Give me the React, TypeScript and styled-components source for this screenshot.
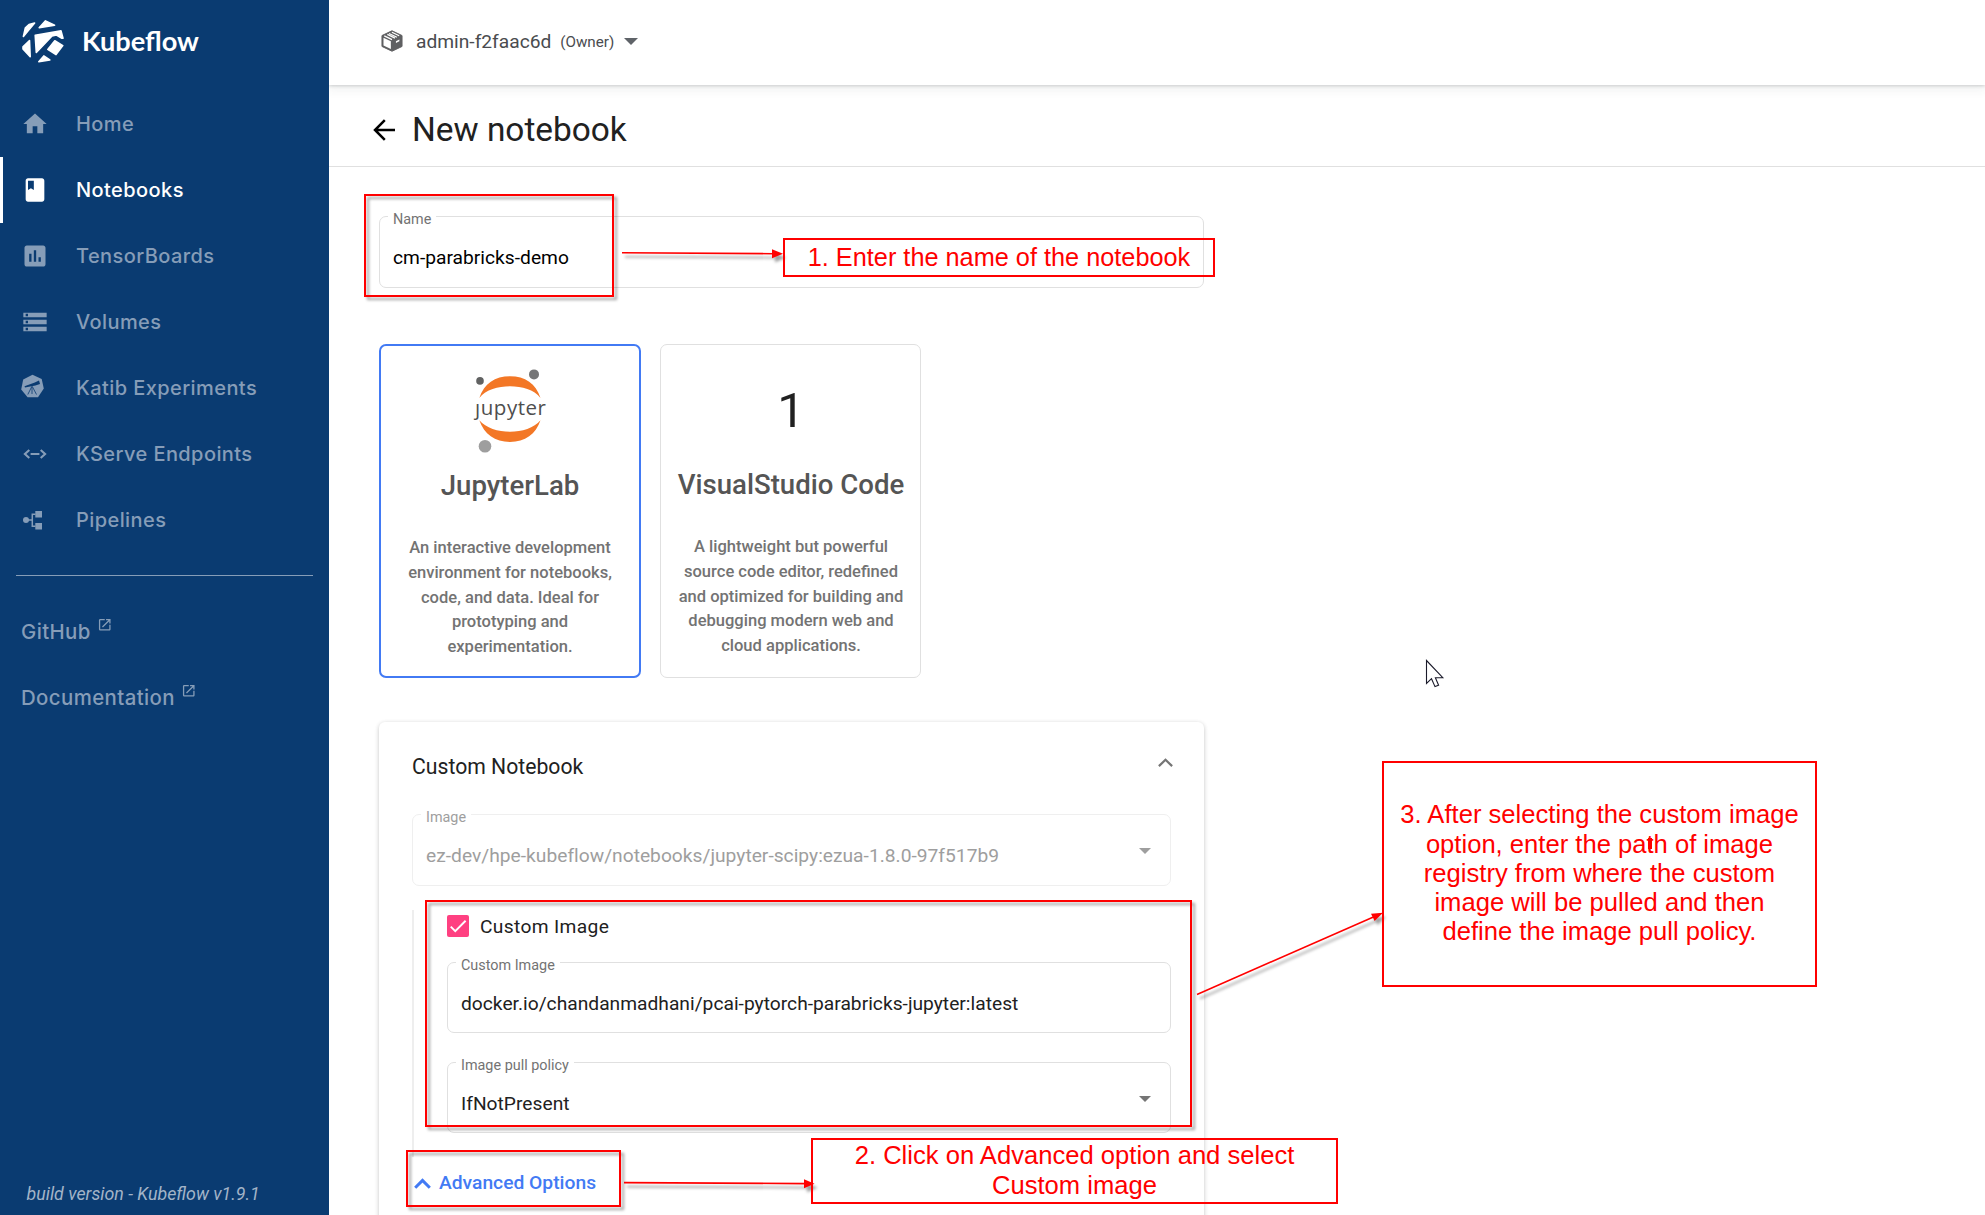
import React from "react";
import styled, { createGlobalStyle, css } from "styled-components";
import { MdHome, MdBook, MdAssessment, MdStorage, MdOpenInNew } from "react-icons/md";

const GlobalStyle = createGlobalStyle`
  * { box-sizing: border-box; }
  html, body { margin: 0; padding: 0; background: #fff; }
  body { font-family: Roboto, sans-serif; color: #212121; overflow: hidden; }
`;

const Page = styled.div`
  position: relative;
  display: grid;
  grid-template-columns: 329px 1fr;
  height: 1215px;
  overflow: hidden;
  background: #fff;
`;

/* ---------- sidebar ---------- */

const Sidebar = styled.aside`
  display: flex;
  flex-direction: column;
  background: #0a3b71;
  color: #869db8;
  font-family: Inter, sans-serif;
`;

const Brand = styled.div`
  display: flex;
  align-items: center;
  height: 91px;
  padding: 0 0 9px 21px;
  gap: 17px;
  color: #fff;
  font: 700 27.2px/36px Lato, sans-serif;
`;

const NavItem = styled.a<{ $active?: boolean }>`
  display: flex;
  align-items: center;
  height: 66px;
  padding-left: 18px;
  border-left: 3px solid ${(p) => (p.$active ? "#fff" : "transparent")};
  color: ${(p) => (p.$active ? "#fff" : "#869db8")};
  font-size: 20px;
  font-weight: 500;
  letter-spacing: 0.42px;
  svg { width: 28px; height: 28px; margin-right: 27px; flex: none; }
`;

const Divider = styled.hr`
  width: 297px;
  height: 1px;
  margin: 22px 0 22px 16px;
  border: 0;
  background: #869db8;
`;

const ExternalLink = styled.a`
  display: flex;
  align-items: center;
  height: 66px;
  padding-left: 21px;
  gap: 6px;
  font-size: 20.4px;
  font-weight: 500;
  letter-spacing: 0.4px;
  svg { width: 15.5px; height: 15.5px; margin-bottom: 13px; }
`;

const BuildVersion = styled.div`
  margin-top: auto;
  padding: 0 0 9px 26.5px;
  color: #a3b4c8;
  font: italic 400 17.8px/24px Roboto, sans-serif;
`;

/* ---------- main column ---------- */

const Main = styled.main`
  display: flex;
  flex-direction: column;
  min-width: 0;
  overflow: hidden;
`;

const TopBar = styled.header`
  position: relative;
  display: flex;
  align-items: center;
  flex: none;
  height: 85px;
  padding: 0 0 3px 52px;
  color: #4a4c4f;
  font-size: 19.2px;
  box-shadow: 0 1px 3px rgba(60, 64, 67, 0.22), 0 3px 10px 2px rgba(60, 64, 67, 0.07);
  > svg { margin-right: 13px; }
`;

const Role = styled.span`
  margin: 1px 10px 0 9px;
  font-size: 15.2px;
`;

const Caret = styled.i<{ $w: number; $h: number; $color: string }>`
  width: 0;
  height: 0;
  border-left: ${(p) => p.$w / 2}px solid transparent;
  border-right: ${(p) => p.$w / 2}px solid transparent;
  border-top: ${(p) => p.$h}px solid ${(p) => p.$color};
`;

const TitleBar = styled.div`
  display: flex;
  align-items: center;
  flex: none;
  height: 82px;
  padding: 8px 0 0 44px;
  border-bottom: 1px solid #e0e0e0;
  gap: 17px;
`;

const PageTitle = styled.h1`
  margin: 0;
  font-size: 33.4px;
  font-weight: 400;
  line-height: 40px;
`;

const Form = styled.div`
  display: flex;
  flex-direction: column;
  width: 875px;
  padding: 49px 0 0 50px;
`;

const FieldBox = styled.div<{ $height: number; $disabled?: boolean }>`
  position: relative;
  display: flex;
  align-items: flex-start;
  justify-content: space-between;
  flex: none;
  height: ${(p) => p.$height}px;
  padding: 28px 19px 0 13px;
  border: 1px solid ${(p) => (p.$disabled ? "#efefef" : "#e0e0e0")};
  border-radius: 7px;
  color: ${(p) => (p.$disabled ? "#9e9e9e" : "#212121")};
  font-size: 19.22px;
  line-height: 26px;
  > i { margin-top: 5px; }
`;

const FieldLabel = styled.label<{ $disabled?: boolean }>`
  position: absolute;
  top: -5px;
  left: 8px;
  padding: 0 5px;
  background: #fff;
  color: ${(p) => (p.$disabled ? "#9e9e9e" : "#737373")};
  font-size: 14.4px;
  line-height: 16px;
`;

const FieldValue = styled.span<{ $ink?: string }>`
  white-space: nowrap;
  letter-spacing: 0.015px;
  ${(p) => p.$ink && css`color: ${p.$ink};`}
`;

const Cards = styled.div`
  display: flex;
  gap: 19px;
  margin-top: 56px;
`;

const ServerCard = styled.button<{ $selected?: boolean }>`
  display: flex;
  flex-direction: column;
  align-items: center;
  width: ${(p) => (p.$selected ? 262 : 261)}px;
  height: 334px;
  padding: ${(p) => (p.$selected ? 0 : "0 0 0 1px")};
  background: #fff;
  border: ${(p) => (p.$selected ? "2px solid #427af4" : "1px solid #e0e0e0")};
  border-radius: 7px;
  font-family: Roboto, sans-serif;
`;

const CardArt = styled.div`
  display: flex;
  align-items: center;
  justify-content: center;
  height: 122px;
  padding-top: 8px;
  color: #212121;
  font-size: 49px;
`;

const CardTitle = styled.div`
  color: #555;
  font-size: 27.6px;
  font-weight: 500;
  line-height: 36px;
  white-space: nowrap;
`;

const CardText = styled.div`
  margin-top: 32px;
  color: #737373;
  font-size: 16.55px;
  font-weight: 500;
  line-height: 24.8px;
  text-align: center;
  white-space: pre-line;
`;

const Panel = styled.section`
  display: flex;
  flex-direction: column;
  flex: none;
  height: 560px;
  margin-top: 44px;
  padding: 0 33px;
  border-radius: 6px;
  box-shadow: 0 1px 4px rgba(0, 0, 0, 0.18), 0 2px 6px rgba(0, 0, 0, 0.06);
`;

const PanelHeader = styled.div`
  display: flex;
  align-items: center;
  justify-content: space-between;
  flex: none;
  height: 92px;
  padding: 0 0 4px;
  font-size: 21.2px;
  svg { margin: 0 -2px 8px 0; }
`;

const AdvancedGroup = styled.div`
  display: flex;
  flex-direction: column;
  flex: none;
  height: 247px;
  margin-top: 24px;
  padding-left: 33px;
  border-left: 2px solid #eee;
`;

const CheckRow = styled.label`
  display: flex;
  align-items: center;
  height: 32px;
  gap: 11px;
  margin-bottom: 20px;
  font-size: 19.2px;
  letter-spacing: 0.35px;
`;

const CheckBox = styled.span`
  display: flex;
  width: 22px;
  height: 22px;
  border-radius: 2px;
  background: #ff4081;
`;

const Spacer = styled.div<{ $size: number }>`
  flex: none;
  height: ${(p) => p.$size}px;
`;

const AdvancedToggle = styled.button`
  display: flex;
  align-items: center;
  align-self: flex-start;
  height: 40px;
  margin-top: 6px;
  padding: 0 0 0 2px;
  gap: 8px;
  border: 0;
  background: none;
  color: #427af4;
  font: 500 19.25px/24px Roboto, sans-serif;
`;

/* ---------- annotations laid over the page ---------- */

const Highlight = styled.div<{ $x: number; $y: number; $w: number; $h: number }>`
  position: absolute;
  left: ${(p) => p.$x}px;
  top: ${(p) => p.$y}px;
  width: ${(p) => p.$w}px;
  height: ${(p) => p.$h}px;
  border: 2px solid #f00;
  filter: drop-shadow(3px 3px 1.5px rgba(0, 0, 0, 0.38));
`;

const Note = styled.div<{ $x: number; $y: number; $w: number; $h: number; $shift?: number; $size?: number }>`
  position: absolute;
  left: ${(p) => p.$x}px;
  top: ${(p) => p.$y}px;
  width: ${(p) => p.$w}px;
  height: ${(p) => p.$h}px;
  display: flex;
  align-items: center;
  justify-content: center;
  padding-bottom: ${(p) => p.$shift ?? 0}px;
  border: 2px solid #f00;
  color: #f00;
  font: 400 ${(p) => p.$size ?? 25.6}px/29.3px "Liberation Sans", Arial, sans-serif;
  text-align: center;
  white-space: pre;
`;

const ArrowLayer = styled.svg`
  position: absolute;
  inset: 0;
  pointer-events: none;
  g { filter: drop-shadow(3px 4px 1.5px rgba(0, 0, 0, 0.38)); }
`;

const TextCursor = styled.span`
  position: absolute;
  left: 1648px;
  top: 838px;
  width: 4px;
  height: 11px;
  background: #f00;
`;

const Pointer = styled.svg`
  position: absolute;
  left: 1425px;
  top: 659px;
`;

/* ---------- drawings ---------- */

const KubeflowLogo = () => (
  <svg width="44" height="46" viewBox="0 0 44 46" fill="#fff" stroke="#fff" strokeWidth="1.6" strokeLinejoin="round">
    <path d="M2.4 18.4 4.4 9.8 8 6.5 13.6 5 6.5 13.5z" />
    <path d="M18.2 9.7 24.5 2.9 33.6 7.2z" />
    <path d="M14.2 17.2 40 12.9 42 20.2 40.5 20.2 35.5 17 31 18 15.3 34.5z" />
    <path d="M33.8 22.8 41.8 27.6 35 36.6 26.8 31.4z" />
    <path d="M2 28.8 8.5 22.6 9.2 38.8 2 31z" />
    <path d="M17.8 43.7 22.8 37.9 28.8 42z" />
  </svg>
);

const KatibIcon = () => (
  <svg viewBox="0 0 28 28">
    <path fill="currentColor" d="M11.5.8 20.7 5 22.8 14.6 17 23.3H6.6L.2 15.6 2.2 5.6z" />
    <path fill="#0a3b71" d="M3.5 12.2 13.8 8.4 18 6.600l1 3.400-4.600 1.400L4 13.400z" />
    <path stroke="#0a3b71" strokeWidth="0.8" fill="none" d="M10.8 12.5 6.8 20.5M11 12.5v7.5M11.3 12.5l4.2 8" />
  </svg>
);

const EndpointsIcon = () => (
  <svg viewBox="0 0 28 28" fill="none" stroke="currentColor" strokeWidth="2.1">
    <path d="M8.3 10 3.9 14 8.3 18M19.7 10 24.1 14 19.7 18M9.6 14h8.8" />
  </svg>
);

const PipelinesIcon = () => (
  <svg viewBox="0 0 28 28" fill="currentColor">
    <circle cx="5" cy="14" r="3" />
    <path d="M14.3 5h6.7v6.5h-6.7zM14.3 17h6.7v6.5h-6.7z" />
    <path fill="none" stroke="currentColor" strokeWidth="1.5" d="M5 14h6M14.5 8.2h-3.2v12h3.2" />
  </svg>
);

const PackageIcon = () => (
  <svg width="22" height="24" viewBox="0 0 23 24">
    <path fill="#5f6062" stroke="#5f6062" strokeLinejoin="round" d="M11.5 1.3 22 6.3v11.4l-10.5 5L1 17.7V6.3z" />
    <path fill="#fff" d="M2.6 8.6 10.3 12.2v8.2L2.6 16.7z" />
    <path stroke="#fff" strokeWidth="1.3" fill="none" d="M3.4 6.6 11.5 10.6M6.6 5.1l8 3.9M8.4 4.1l8.2 4M11.4 2.8l7.6 3.7" />
    <path fill="#fff" d="m15.6 12.2 3.6-1.7v1.8l-3.6 1.7z" />
  </svg>
);

const BackArrow = () => (
  <svg width="22" height="22" viewBox="0 0 22 22" fill="none" stroke="#000" strokeWidth="2.5">
    <path d="M22 11H2M11.8 1.2 2 11l9.8 9.8" />
  </svg>
);

const Chevron = ({ w, h, sw, color }: { w: number; h: number; sw: number; color: string }) => (
  <svg width={w} height={h} viewBox={`0 0 ${w} ${h}`} fill="none" stroke={color} strokeWidth={sw}>
    <path d={`M${sw * 0.4} ${h - sw * 0.4} ${w / 2} ${sw * 0.8} ${w - sw * 0.4} ${h - sw * 0.4}`} />
  </svg>
);

const JupyterLogo = () => (
  <svg width="74" height="86" viewBox="0 0 74 86">
    <path fill="#f37726" d="M6.3 30C11 15.5 22 8.2 37 8.2S63 15.5 67.5 30C61 21.5 49 18.2 37 18.2S13 21.5 6.3 30z" />
    <path fill="#f37726" d="M6.3 52.300C11 66 22 74 37 74S63 66 67.500 52.300C61 60 49 63.800 37 63.800S13 60 6.300 52.300z" />
    <circle cx="7" cy="12.9" r="3.8" fill="#616262" />
    <circle cx="61" cy="6.4" r="5" fill="#767677" />
    <circle cx="12" cy="78.3" r="6.3" fill="#9e9e9e" />
    <text x="37.5" y="46.500" textAnchor="middle" fontFamily="Open Sans, sans-serif" fontSize="20.5" fill="#4e4e4e" textLength="71">ȷupyter</text>
  </svg>
);

/* ---------- composed parts ---------- */

type FieldProps = {
  label: string;
  value: string;
  height?: number;
  disabled?: boolean;
  select?: boolean;
  ink?: string;
};

const Field = ({ label, value, height = 72, disabled, select, ink }: FieldProps) => (
  <FieldBox $height={height} $disabled={disabled}>
    <FieldLabel $disabled={disabled}>{label}</FieldLabel>
    <FieldValue $ink={ink}>{value}</FieldValue>
    {select && <Caret $w={12} $h={6} $color={disabled ? "#9e9e9e" : "#757575"} />}
  </FieldBox>
);

const NAV = [
  { label: "Home", icon: <MdHome /> },
  { label: "Notebooks", icon: <MdBook />, active: true },
  { label: "TensorBoards", icon: <MdAssessment /> },
  { label: "Volumes", icon: <MdStorage /> },
  { label: "Katib Experiments", icon: <KatibIcon /> },
  { label: "KServe Endpoints", icon: <EndpointsIcon /> },
  { label: "Pipelines", icon: <PipelinesIcon /> },
];

export default function App() {
  return (
    <Page>
      <GlobalStyle />
      <Sidebar>
        <Brand>
          <KubeflowLogo />
          Kubeflow
        </Brand>
        {NAV.map((n) => (
          <NavItem key={n.label} $active={n.active}>
            {n.icon}
            {n.label}
          </NavItem>
        ))}
        <Divider />
        <ExternalLink>GitHub <MdOpenInNew /></ExternalLink>
        <ExternalLink>Documentation <MdOpenInNew /></ExternalLink>
        <BuildVersion>build version - Kubeflow v1.9.1</BuildVersion>
      </Sidebar>

      <Main>
        <TopBar>
          <PackageIcon />
          admin-f2faac6d
          <Role>(Owner)</Role>
          <Caret $w={14} $h={7} $color="#5f6368" />
        </TopBar>
        <TitleBar>
          <BackArrow />
          <PageTitle>New notebook</PageTitle>
        </TitleBar>

        <Form>
          <Field label="Name" value="cm-parabricks-demo" ink="#000" />
          <Cards>
            <ServerCard $selected>
              <CardArt><JupyterLogo /></CardArt>
              <CardTitle>JupyterLab</CardTitle>
              <CardText>{"An interactive development\nenvironment for notebooks,\ncode, and data. Ideal for\nprototyping and\nexperimentation."}</CardText>
            </ServerCard>
            <ServerCard>
              <CardArt>1</CardArt>
              <CardTitle>VisualStudio Code</CardTitle>
              <CardText>{"A lightweight but powerful\nsource code editor, redefined\nand optimized for building and\ndebugging modern web and\ncloud applications."}</CardText>
            </ServerCard>
          </Cards>

          <Panel>
            <PanelHeader>
              Custom Notebook
              <Chevron w={15} h={9} sw={2.2} color="#757575" />
            </PanelHeader>
            <Field
              label="Image"
              value="ez-dev/hpe-kubeflow/notebooks/jupyter-scipy:ezua-1.8.0-97f517b9"
              disabled
              select
            />
            <AdvancedGroup>
              <CheckRow>
                <CheckBox>
                  <svg width="22" height="22" viewBox="0 0 24 24" fill="none" stroke="#fff" strokeWidth="2.1">
                    <path d="M4.1 12.7 9 17.6 20.3 6.3" />
                  </svg>
                </CheckBox>
                Custom Image
              </CheckRow>
              <Field
                label="Custom Image"
                value="docker.io/chandanmadhani/pcai-pytorch-parabricks-jupyter:latest"
                height={71}
              />
              <Spacer $size={29} />
              <Field label="Image pull policy" value="IfNotPresent" height={71} select />
            </AdvancedGroup>
            <AdvancedToggle>
              <Chevron w={17} h={11} sw={3} color="#427af4" />
              Advanced Options
            </AdvancedToggle>
          </Panel>
        </Form>
      </Main>

      <Highlight $x={364} $y={194} $w={250} $h={103} />
      <Highlight $x={425} $y={900} $w={767} $h={227} />
      <Highlight $x={406} $y={1150} $w={215} $h={57} />

      <ArrowLayer width="1985" height="1215" viewBox="0 0 1985 1215">
        <g stroke="#f00" fill="#f00" strokeWidth="1.6">
          <path d="M622 252.7 774 253.7" />
          <path stroke="none" d="M783 253.8 772 249.3v9z" />
          <path d="M624 1182.6 806 1183.6" />
          <path stroke="none" d="M814.5 1183.7 804 1179.2v9z" />
          <path d="M1197 994.5 1374 916.7" />
          <path stroke="none" d="M1383 912.8 1371 913.8 1374.6 921z" />
        </g>
      </ArrowLayer>

      <Note $x={783} $y={238} $w={432} $h={39} $size={25.3}>1. Enter the name of the notebook</Note>
      <Note $x={811} $y={1138} $w={527} $h={66} $shift={1}>{"2. Click on Advanced option and select\nCustom image"}</Note>
      <Note $x={1382} $y={761} $w={435} $h={226} $shift={1}>
        {"3. After selecting the custom image\noption, enter the path of image\nregistry from where the custom\nimage will be pulled and then\ndefine the image pull policy."}
      </Note>
      <TextCursor />

      <Pointer width="21" height="30" viewBox="0 0 21 30">
        <path d="M1.5 1.5V24.5L6.5 19.7 10 27.6 13.6 26.2 10.4 18.7H17.8z" fill="#fff" stroke="#1b1b2b" strokeWidth="1.1" />
      </Pointer>
    </Page>
  );
}
